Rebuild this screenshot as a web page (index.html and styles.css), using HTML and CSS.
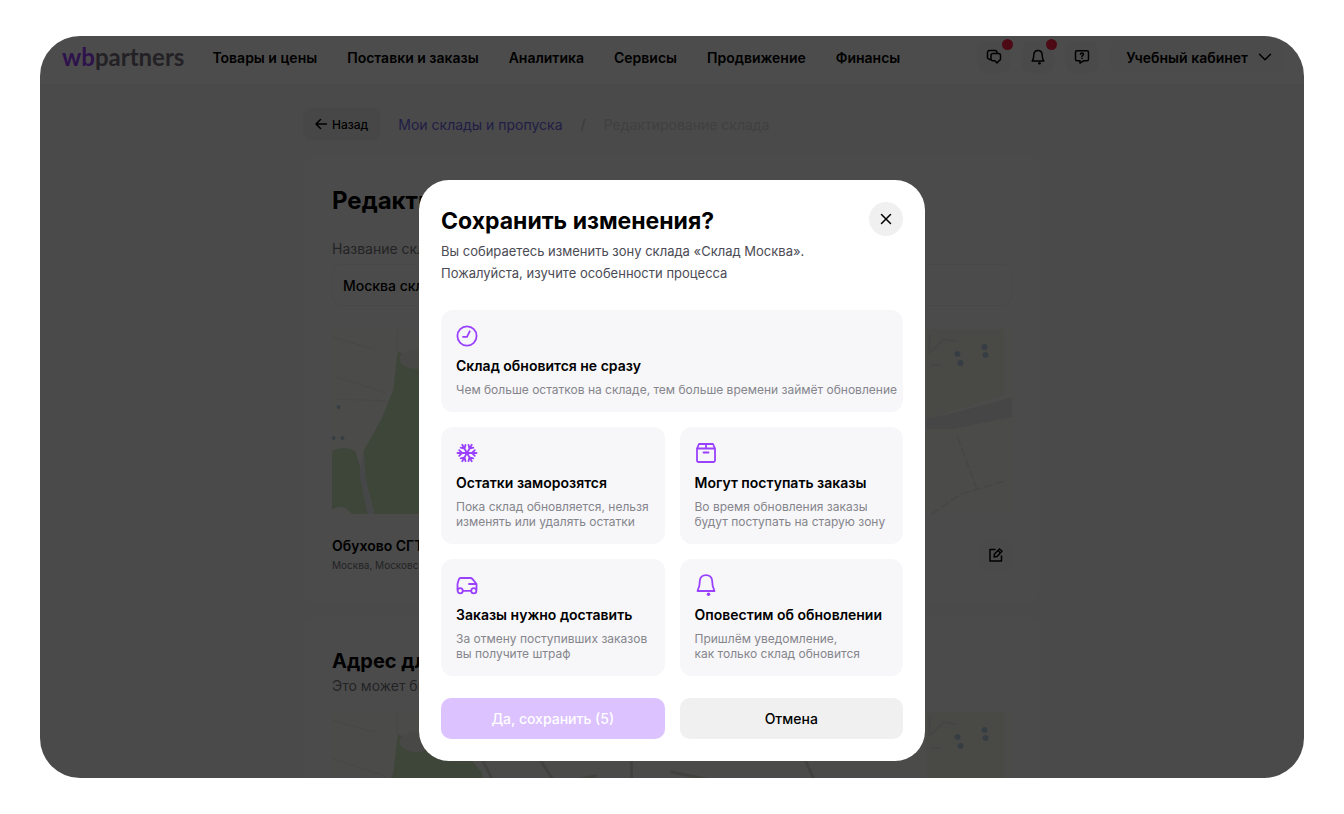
FILE: index.html
```html
<!DOCTYPE html>
<html lang="ru">
<head>
  <meta charset="UTF-8" />
  <meta name="viewport" content="width=device-width, initial-scale=1.0" />
  <title>Редактирование склада</title>
  <link rel="stylesheet" href="styles.css">
</head>
<body>
  <div class="window">
    <header class="header">
      <a class="logo" href="#"><span>wb</span>partners</a>
      <nav class="nav">
        <a href="#">Товары и цены</a>
        <a href="#">Поставки и заказы</a>
        <a href="#">Аналитика</a>
        <a href="#">Сервисы</a>
        <a href="#">Продвижение</a>
        <a href="#">Финансы</a>
      </nav>
      <div class="actions">
        <button class="icon-btn has-badge" type="button" aria-label="Чаты">
          <svg width="16" height="16" viewBox="0 0 16 16"><path d="M4.500 10.500H3.400L1.500 9V3.500a2 2 0 0 1 2-2h5.500a2 2 0 0 1 2 2M7 4.500h5.500a2 2 0 0 1 2 2v3.300a2 2 0 0 1-1.500 1.900L11 14l-2-2.200H7a2 2 0 0 1-2-2V6.500a2 2 0 0 1 2-2z"/></svg>
        </button>
        <button class="icon-btn has-badge" type="button" aria-label="Уведомления">
          <svg width="16" height="16" viewBox="0 0 16 16"><path d="M8 1.500c-2.600 0-4 1.800-4.200 4.200L3.500 9 2.200 12h11.600L12.500 9l-.3-3.300C12 3.300 10.600 1.500 8 1.500z"/><circle class="dot" cx="9.500" cy="14.300" r="1.300"/></svg>
        </button>
        <button class="icon-btn" type="button" aria-label="Помощь">
          <svg width="16" height="16" viewBox="0 0 16 16"><path d="M3 1.800h10a1.500 1.500 0 0 1 1.500 1.500v7a1.500 1.500 0 0 1-1.500 1.500H9.500L6 14.200v-2.400H3a1.500 1.500 0 0 1-1.500-1.500v-7A1.500 1.500 0 0 1 3 1.800zM6.500 5.200c.2-1.600 3-1.500 3 .1C9.500 6.300 8 6.400 8 7.400M8 9.200v.4"/></svg>
        </button>
        <button class="account" type="button">Учебный кабинет
          <svg width="14" height="14" viewBox="0 0 14 14"><path d="M1.500 4.200 7 9.800l5.500-5.600"/></svg>
        </button>
      </div>
    </header>

    <main class="content">
      <div class="breadcrumbs">
        <button class="back" type="button">
          <svg width="12" height="12" viewBox="0 0 12 12"><path d="M11.500 6H1M5.500 1.500 1 6l4.500 4.500"/></svg>
          Назад
        </button>
        <a href="#">Мои склады и пропуска</a>
        <span class="slash">/</span>
        <span class="current">Редактирование склада</span>
      </div>

      <section class="panel">
        <h1>Редактирование склада</h1>
        <label for="warehouse">Название склада</label>
        <input id="warehouse" type="text" value="Москва склад">
        <svg class="map" viewBox="0 0 681 185" preserveAspectRatio="xMidYMin slice">
          <g id="map-drawing">
            <rect width="681" height="185" fill="#fbfbf8"/>
            <path d="M66 22 62 60 50 90 32 122 34 150 43 185H170L150 60 125 30 90 34z" fill="#cfe8bf"/>
            <path d="M0 122q12-6 24 0l6 20 8 43H20q-8-12-20-4z" fill="#cfe8bf"/>
            <path d="M32 122 34 150 43 185H36l-8-40z" fill="#eceff2"/>
            <ellipse cx="85" cy="30" rx="17" ry="10" fill="#f2f2ea"/>
            <path d="M0 8 42 20M0 46l54 18M66 2v24M6 70l50 2" stroke="#f3f0e9" fill="none"/>
            <path d="M595 0h78v66l-78 24z" fill="#f5f5ec"/>
            <path d="M595 90 622 84 681 68V88L622 100H595z" fill="#ebebe9"/>
            <path d="M598 6v18l14-14 12 2M600 36h8M654 79h12" stroke="#e8e8e4" stroke-width="2" fill="none"/>
            <path d="M626 108l20 54M600 185l30-20 46-14" stroke="#e8e8e2" stroke-dasharray="8 4" fill="none"/>
            <path d="M150 46l20 40M210 50l14 22 40-8M300 30v60M340 60l70 14M470 40l20 44" stroke="#dcdcd4" stroke-width="3" fill="none"/>
            <g fill="#b7cfe2">
              <circle cx="7" cy="78" r="2"/><circle cx="2" cy="109" r="2"/><circle cx="11" cy="109" r="2"/>
              <circle cx="626" cy="25" r="3"/><circle cx="629" cy="34" r="3"/><circle cx="653" cy="18" r="3"/><circle cx="654" cy="26" r="3"/>
            </g>
          </g>
        </svg>
        <div class="address">
          <div>
            <h3>Обухово СГТ</h3>
            <p>Москва, Московская</p>
          </div>
          <button class="icon-btn" type="button" aria-label="Изменить адрес">
            <svg width="16" height="16" viewBox="0 0 16 16"><path d="M7 2.500H2v11.500h11.500V9M6 10l.5-3L11.500 2l2.500 2.300L9 9.500z M10 3.500l2.500 2.500"/></svg>
          </button>
        </div>
      </section>

      <section class="panel">
        <h2>Адрес для</h2>
        <p class="note">Это может быть</p>
        <svg class="map" viewBox="0 0 681 185" preserveAspectRatio="xMidYMin slice"><use href="#map-drawing"/></svg>
      </section>
    </main>

    <div class="overlay">
      <div class="modal" role="dialog" aria-modal="true" aria-labelledby="modal-title">
        <div class="modal-header">
          <h2 id="modal-title">Сохранить изменения?</h2>
          <button class="close" type="button" aria-label="Закрыть">
            <svg width="12" height="12" viewBox="0 0 12 12"><path d="M1.500 1.500l9 9M10.500 1.500l-9 9"/></svg>
          </button>
        </div>
        <p class="lead">Вы собираетесь изменить зону склада «Склад Москва».<br>Пожалуйста, изучите особенности процесса</p>

        <div class="cards">
          <div class="card wide">
            <svg width="22" height="22" viewBox="0 0 22 22"><circle cx="11" cy="11" r="9.600"/><path d="M7 11.800h4l2.700-5.500"/></svg>
            <h3>Склад обновится не сразу</h3>
            <p>Чем больше остатков на складе, тем больше времени займёт обновление</p>
          </div>
          <div class="card">
            <svg width="22" height="22" viewBox="0 0 22 22">
              <path id="arm" d="M11 11h9.500M18.800 8.200 16 11l2.800 2.800"/>
              <use href="#arm" transform="rotate(60 11 11)"/>
              <use href="#arm" transform="rotate(120 11 11)"/>
              <use href="#arm" transform="rotate(180 11 11)"/>
              <use href="#arm" transform="rotate(240 11 11)"/>
              <use href="#arm" transform="rotate(300 11 11)"/>
            </svg>
            <h3>Остатки заморозятся</h3>
            <p>Пока склад обновляется, нельзя<br>изменять или удалять остатки</p>
          </div>
          <div class="card">
            <svg width="22" height="22" viewBox="0 0 22 22"><path d="M2 6.500 4 2h14l2 4.500v12a1.500 1.500 0 0 1-1.500 1.500h-15A1.500 1.500 0 0 1 2 18.500zM2 6.500h18M11 2v4.500M8.500 10.500h5"/></svg>
            <h3>Могут поступать заказы</h3>
            <p>Во время обновления заказы<br>будут поступать на старую зону</p>
          </div>
          <div class="card">
            <svg width="22" height="22" viewBox="0 0 22 22"><circle cx="4.200" cy="16.800" r="2.600"/><circle cx="17.800" cy="16.800" r="2.600"/><path d="M6.800 16.800h8.400M1.500 15.500V10l1.300-4.600A2 2 0 0 1 4.700 4h9.600a3 3 0 0 1 2.300 1.100L20.500 10v5.500M13 10h7.500"/></svg>
            <h3>Заказы нужно доставить</h3>
            <p>За отмену поступивших заказов<br>вы получите штраф</p>
          </div>
          <div class="card">
            <svg width="22" height="22" viewBox="0 0 22 22"><path d="M11 1.200c-3.700 0-5.900 2.500-6.200 5.800l-.5 5L2.500 17h17l-1.800-5-.5-5C16.900 3.700 14.700 1.200 11 1.200z"/><circle class="dot" cx="13.500" cy="20.200" r="1.800"/></svg>
            <h3>Оповестим об обновлении</h3>
            <p>Пришлём уведомление,<br>как только склад обновится</p>
          </div>
        </div>

        <div class="buttons">
          <button class="btn primary" type="button" disabled>Да, сохранить (5)</button>
          <button class="btn secondary" type="button">Отмена</button>
        </div>
      </div>
    </div>
  </div>
</body>
</html>
```
FILE: styles.css
```css
* { box-sizing: border-box; }
body { margin: 0; padding: 36px 40px; background: #fff; color: #000; font-family: Inter, "Noto Sans", sans-serif; font-size: 14px; }
h1, h2, h3, p { margin: 0; }
a { color: inherit; text-decoration: none; }
button, input { font: inherit; color: inherit; border: none; }
button { cursor: pointer; padding: 0; }
svg { display: block; fill: none; stroke: currentColor; stroke-width: 1.5; stroke-linecap: round; stroke-linejoin: round; }
svg .dot { fill: currentColor; stroke: none; }

.window { position: relative; height: calc(100vh - 72px); overflow: hidden; border-radius: 40px; background: #f7f7f7; }

/* Header */
.header { display: flex; align-items: center; height: 48px; padding: 0 20px 6px 22px; background: #fff; }
.logo { font-family: Lato, sans-serif; font-size: 24px; font-weight: 700; line-height: 28px; color: #75707f; }
.logo span { color: #9a3dff; }
.nav { display: flex; gap: 30px; margin-left: 28px; font-weight: 600; }
.actions { display: flex; gap: 12px; margin-left: auto; }
.icon-btn { position: relative; display: flex; align-items: center; justify-content: center; width: 32px; height: 32px; border-radius: 8px; background: #f7f7f7; }
.has-badge::after { content: ""; position: absolute; top: -2px; right: -3px; width: 11px; height: 11px; border-radius: 50%; background: #ff2347; }
.account { display: flex; align-items: center; gap: 10px; height: 32px; padding: 0 12px 0 16px; border-radius: 8px; background: #fafafa; font-weight: 600; }

/* Page */
.content { display: flex; flex-direction: column; gap: 14px; max-width: 738px; margin: 0 auto; padding-top: 24px; }
.breadcrumbs { display: flex; align-items: center; gap: 18px; height: 32px; }
.breadcrumbs a { color: #6f66e8; }
.back { display: flex; align-items: center; gap: 5px; height: 32px; padding: 0 12px; border-radius: 8px; background: #efefef; font-size: 12px; font-weight: 500; }
.slash { color: #c4c4c4; }
.current { color: #d6d6d6; }
.panel { padding: 29px; border-radius: 16px; background: #fcfcfc; }
.panel h1 { font-size: 24px; line-height: 36px; }
.panel h2 { font-size: 20px; line-height: 30px; }
.panel label { display: block; margin-top: 20px; line-height: 20px; color: #77777c; }
.panel input { display: block; width: 100%; height: 42px; margin-top: 5px; padding: 0 10px; border: 1px solid #f0f0f0; border-radius: 10px; background: #fcfcfc; font-weight: 500; }
.map { width: 100%; height: 185px; margin-top: 23px; stroke: none; }
.address { display: flex; align-items: center; justify-content: space-between; margin-top: 22px; }
.address h3 { font-size: 14px; font-weight: 600; line-height: 20px; }
.address p { font-size: 10px; line-height: 18px; color: #77777c; }
.note { line-height: 20px; color: #77777c; }
.note + .map { margin-top: 16px; }

/* Modal */
.overlay { position: absolute; inset: 0; display: flex; align-items: flex-start; justify-content: center; padding-top: 144px; background: rgba(0, 0, 0, 0.7); }
.modal { width: 506px; padding: 22px; border-radius: 30px; background: #fff; }
.modal-header { display: flex; align-items: flex-end; justify-content: space-between; }
.modal-header h2 { font-size: 23px; font-weight: 700; line-height: 30px; }
.close { display: flex; align-items: center; justify-content: center; width: 34px; height: 34px; border-radius: 50%; background: #f0f0f0; }
.lead { margin-top: 4px; font-size: 13px; line-height: 22px; color: #4b4b55; }
.cards { display: grid; grid-template-columns: 1fr 1fr; gap: 15px; margin-top: 26px; }
.card { padding: 15px; border-radius: 12px; background: #f7f7fa; }
.card.wide { grid-column: 1 / -1; }
.card svg { color: #9a41fe; stroke-width: 1.8; }
.card h3 { margin-top: 9px; font-size: 14px; font-weight: 600; line-height: 20px; }
.card p { margin-top: 6px; font-size: 12px; line-height: 15px; white-space: nowrap; color: #85858b; }
.buttons { display: grid; grid-template-columns: 1fr 1fr; gap: 15px; margin-top: 22px; }
.btn { height: 41px; border-radius: 10px; font-size: 14px; font-weight: 500; }
.btn.primary { background: #dcc2ff; color: #fff; cursor: default; }
.btn.secondary { background: #f0f0f0; }
```
